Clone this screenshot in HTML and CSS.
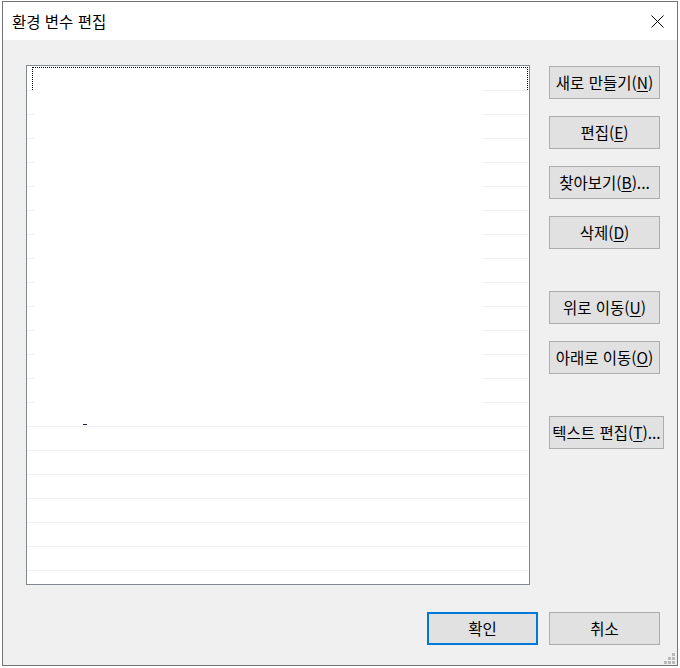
FILE: index.html
```html
<!DOCTYPE html>
<html lang="ko">
<head>
<meta charset="utf-8">
<title>환경 변수 편집</title>
<link rel="stylesheet" href="styles.css">
</head>
<body>
<div class="window">
  <div class="titlebar">
    <span class="title">환경 변수 편집</span>
    <svg class="close" width="13" height="13" viewBox="0 0 13 13"><path d="M0.5 0.5 L12.5 12.5 M12.5 0.5 L0.5 12.5" stroke="#000" stroke-width="1" fill="none"/></svg>
  </div>
  <div class="content">
    <div class="main">
      <div class="list">
        <div class="row partial"><span class="focus"></span><span class="c c1"></span><span class="c c2"></span><span class="c c3"></span></div>
        <div class="row partial"><span class="c c1"></span><span class="c c2"></span><span class="c c3"></span></div>
        <div class="row partial"><span class="c c1"></span><span class="c c2"></span><span class="c c3"></span></div>
        <div class="row partial"><span class="c c1"></span><span class="c c2"></span><span class="c c3"></span></div>
        <div class="row partial"><span class="c c1"></span><span class="c c2"></span><span class="c c3"></span></div>
        <div class="row partial"><span class="c c1"></span><span class="c c2"></span><span class="c c3"></span></div>
        <div class="row partial"><span class="c c1"></span><span class="c c2"></span><span class="c c3"></span></div>
        <div class="row partial"><span class="c c1"></span><span class="c c2"></span><span class="c c3"></span></div>
        <div class="row partial"><span class="c c1"></span><span class="c c2"></span><span class="c c3"></span></div>
        <div class="row partial"><span class="c c1"></span><span class="c c2"></span><span class="c c3"></span></div>
        <div class="row partial"><span class="c c1"></span><span class="c c2"></span><span class="c c3"></span></div>
        <div class="row partial"><span class="c c1"></span><span class="c c2"></span><span class="c c3"></span></div>
        <div class="row partial"><span class="c c1"></span><span class="c c2"></span><span class="c c3"></span></div>
        <div class="row partial"><span class="c c1"></span><span class="c c2"></span><span class="c c3"></span></div>
        <div class="row"><span class="c c1"></span><span class="c c2"></span><span class="c c3"></span></div>
        <div class="row"><span class="c c1"></span><span class="c c2"></span><span class="c c3"></span></div>
        <div class="row"><span class="c c1"></span><span class="c c2"></span><span class="c c3"></span></div>
        <div class="row"><span class="c c1"></span><span class="c c2"></span><span class="c c3"></span></div>
        <div class="row"><span class="c c1"></span><span class="c c2"></span><span class="c c3"></span></div>
        <div class="row"><span class="c c1"></span><span class="c c2"></span><span class="c c3"></span></div>
        <div class="row"><span class="c c1"></span><span class="c c2"></span><span class="c c3"></span></div>
        <span class="tick"></span>
      </div>
      <div class="buttons">
        <button class="btn">새로 만들기(<u>N</u>)</button>
        <button class="btn">편집(<u>E</u>)</button>
        <button class="btn">찾아보기(<u>B</u>)...</button>
        <button class="btn">삭제(<u>D</u>)</button>
        <button class="btn sep">위로 이동(<u>U</u>)</button>
        <button class="btn">아래로 이동(<u>O</u>)</button>
        <button class="btn sep wide">텍스트 편집(<u>T</u>)...</button>
      </div>
    </div>
    <div class="footer">
      <button class="btn default">확인</button>
      <button class="btn">취소</button>
    </div>
    <svg class="grip" width="11" height="11" viewBox="0 0 11 11">
      <g fill="#bababa">
        <rect x="8" y="0" width="3" height="3"/>
        <rect x="4" y="4" width="3" height="3"/>
        <rect x="8" y="4" width="3" height="3"/>
        <rect x="0" y="8" width="3" height="3"/>
        <rect x="4" y="8" width="3" height="3"/>
        <rect x="8" y="8" width="3" height="3"/>
      </g>
    </svg>
  </div>
</div>
</body>
</html>
```

FILE: styles.css
```css
* {
  box-sizing: border-box;
}

html,
body {
  margin: 0;
  padding: 0;
}

body {
  background: #ffffff;
  font-family: "Noto Sans CJK KR", "Noto Sans", sans-serif;
  color: #000;
}

.window {
  margin: 1px 0 0 2px;
  width: 676px;
  height: 665px;
  border: 1px solid #737373;
  background: #f0f0f0;
  display: flex;
  flex-direction: column;
}

.titlebar {
  height: 38px;
  flex-shrink: 0;
  background: #ffffff;
  display: flex;
  align-items: center;
  justify-content: space-between;
  padding: 0 13px 0 9px;
}

.title {
  font-size: 15.5px;
  line-height: 20px;
}

.close {
  display: block;
  width: 13px;
  height: 13px;
}

.content {
  position: relative;
  flex: 1;
  padding: 25px 0 0 23px;
}

.main {
  display: flex;
}

.list {
  position: relative;
  width: 504px;
  height: 520px;
  border: 1px solid #828790;
  background: #ffffff;
  padding-top: 1px;
}

.row {
  position: relative;
  display: flex;
  height: 24px;
}

.c {
  display: block;
  height: 24px;
  border-bottom: 1px solid #f0f0f0;
}

.c1 {
  width: 7px;
}

.c2 {
  width: 449px;
}

.c3 {
  width: 45px;
}

.partial .c2 {
  border-bottom-color: transparent;
}

.focus {
  position: absolute;
  left: 5px;
  top: 0;
  width: 496px;
  height: 23px;
  border: 1px dotted #000;
  border-bottom: none;
}

.tick {
  position: absolute;
  left: 56px;
  top: 358px;
  width: 4px;
  height: 1px;
  background: #1c1c5c;
}

.buttons {
  display: flex;
  flex-direction: column;
  align-items: flex-start;
  gap: 17px;
  margin-left: 19px;
  padding-top: 1px;
}

.btn {
  width: 111px;
  height: 33px;
  margin: 0;
  padding: 0 0 1px 0;
  background: #e1e1e1;
  border: 1px solid #adadad;
  border-radius: 0;
  font-family: "Noto Sans CJK KR", "Noto Sans", sans-serif;
  font-size: 15.5px;
  line-height: 20px;
  color: #000;
  display: flex;
  align-items: center;
  justify-content: center;
  white-space: nowrap;
}

.btn u {
  text-underline-offset: 2px;
}

.btn.wide {
  width: 115px;
}

.btn.sep {
  margin-top: 25px;
}

.btn.default {
  border: 2px solid #0078d7;
}

.footer {
  display: flex;
  justify-content: flex-end;
  gap: 11px;
  margin-top: 27px;
  padding-right: 17px;
}

.grip {
  position: absolute;
  right: 2px;
  bottom: 1px;
  display: block;
}
```
